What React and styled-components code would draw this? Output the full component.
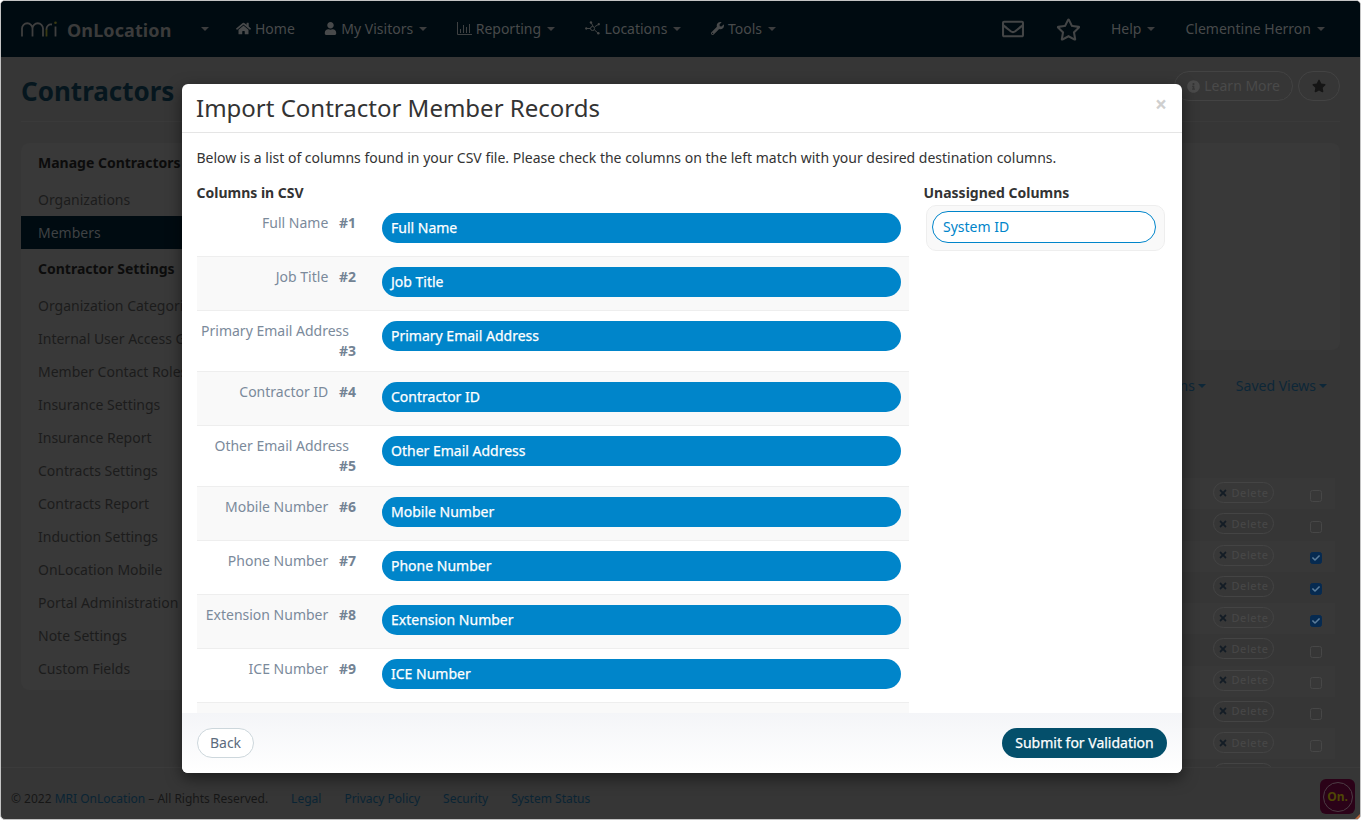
import React from 'react';
import styled, { createGlobalStyle } from 'styled-components';
import { FaHome, FaUser, FaWrench, FaRegStar, FaRegEnvelope, FaInfoCircle, FaStar, FaTimes, FaCheck } from 'react-icons/fa';

const Global = createGlobalStyle`
  html, body { margin: 0; padding: 0; background: #fff; }
  body { font-family: "Noto Sans", "Open Sans", sans-serif; font-size: 14px; line-height: 20px; }
  * { box-sizing: border-box; }
`;

const Frame = styled.div`
  position: relative; width: 1361px; height: 820px; overflow: hidden;
  display: flex; flex-direction: column;
  background: #363636; border: 1px solid #c4c4c4; border-radius: 5px;
`;

/* ---------- dimmed page behind the dialog ---------- */
const Nav = styled.nav`
  flex: none; height: 56px; background: #000b11; color: #484a4b;
  display: flex; align-items: center; padding-left: 20px; padding-right: 35px;
`;
const Brand = styled.div`display: flex; align-items: center; gap: 10px; width: 180px;`;
const BrandName = styled.span`font-size: 18px; font-weight: 700; color: #3b3b3b; letter-spacing: .1px; margin-top: 2px;`;
const Menu = styled.div`display: flex; align-items: center; gap: 29.5px; margin-left: 27px;`;
const MenuItem = styled.span`display: inline-flex; align-items: center; gap: 4px; font-size: 14px; margin-top: -1px; margin-right: ${p => p.$mr || 0}px;`;
const Caret = styled.i`
  display: inline-block; width: 0; height: 0; margin-left: ${p => p.$gap ?? 3}px;
  border-left: 4px solid transparent; border-right: 4px solid transparent;
  border-top: 4px solid ${p => p.$color || '#3c3d3e'};
`;
const NavRight = styled.div`margin-left: auto; display: flex; align-items: center;`;
const NavIcon = styled.span`display: inline-flex; color: #434546; margin-right: ${p => p.$mr}px;`;

const Main = styled.main`flex: 1; min-height: 0; overflow: hidden; display: flex; flex-direction: column; padding: 0 20px;`;
const TitleRow = styled.div`
  flex: none; height: 65px; display: flex; align-items: center; justify-content: space-between;
  border-bottom: 1px solid #3a3a3a; padding-top: 4px;
`;
const PageTitle = styled.h1`margin: 0; font-size: 26px; line-height: 36px; font-weight: 700; color: #06161e;`;
const TitleActions = styled.div`display: flex; gap: 5px; margin-top: -10px;`;
const GhostPill = styled.span`
  height: 30px; min-width: 42px; display: inline-flex; align-items: center; justify-content: center; gap: 4px;
  padding: 0 12px; border: 1px solid #434343; border-radius: 15px; color: #4a4a4a;
`;
const Columns = styled.div`display: flex; gap: 15px; margin-top: 21px; flex: 1; min-height: 0;`;
const Side = styled.aside`
  flex: none; width: 205px; height: 547px; padding-bottom: 5px;
  background: #393939; border-radius: 8px;
`;
const SideHead = styled.div`height: 40px; padding-left: 17px; display: flex; align-items: center; font-weight: 700; color: #0c0c0c;`;
const SideItem = styled.div`
  height: 33px; padding-left: 17px; display: flex; align-items: center;
  color: ${p => p.$on ? '#3f4244' : '#1c1c1c'}; background: ${p => p.$on ? '#000b11' : 'transparent'};
`;
const Content = styled.section`flex: 1; min-width: 0; overflow: hidden;`;
const TopPanel = styled.div`height: 207px; background: #393939; border-radius: 8px;`;
const Toolbar = styled.div`
  height: 20px; margin-top: 26px; padding-right: 13px; display: flex; justify-content: flex-end; gap: 30px;
  color: #0d2738;
`;
const ToolLink = styled.span`display: inline-flex; align-items: center;`;
const Table = styled.div`margin-top: 82px; margin-right: 5px;`;
const Row = styled.div`
  height: 31.25px; display: flex; justify-content: flex-end; align-items: center; gap: 36px; padding-right: 13px;
  background: ${p => p.$odd ? '#383838' : 'transparent'};
`;
const DeleteBtn = styled.span`
  width: 61px; height: 21px; border: 1px solid #444; border-radius: 11px; margin-top: -2px;
  display: inline-flex; align-items: center; justify-content: center; gap: 3px;
  font-size: 11px; letter-spacing: .6px; color: #484848;
  svg { color: #131c25; }
`;
const Check = styled.span`
  width: 12px; height: 12px; border-radius: 2.5px; margin-top: 4px;
  display: inline-flex; align-items: center; justify-content: center;
  border: 1px solid ${p => p.$on ? '#062a50' : '#474747'}; background: ${p => p.$on ? '#062a50' : 'transparent'};
  color: #5c7d9a;
`;
const Foot = styled.footer`
  flex: none; height: 52px; padding: 10px 0 0 10px; border-top: 1px solid #3b3b3b;
  display: flex; align-items: center; font-size: 12px; color: #161616;
`;
const FootText = styled.span`margin-right: 23px;`;
const FootLink = styled.a`color: #0a2434; margin-right: ${p => p.$mr || 0}px;`;
const Badge = styled.div`
  position: absolute; left: 1319px; top: 778px; width: 35px; height: 35px; border-radius: 6px;
  background: #2b0218; display: flex; align-items: center; justify-content: center;
`;
const BadgeRing = styled.div`
  width: 30px; height: 30px; border-radius: 50%; border: 1px solid #4c3c44;
  display: flex; align-items: center; justify-content: center;
  font-size: 12px; font-weight: 700; color: #4f4605;
`;
const Corner = styled.div`
  position: absolute; right: 0; bottom: 0; width: 5px; height: 5px; background: #b8693c;
  clip-path: polygon(100% 0, 100% 100%, 0 100%);
`;

/* ---------- dialog ---------- */
const Dialog = styled.div`
  position: absolute; left: 181px; top: 83px; width: 1000px; height: 689px;
  background: #fff; border-radius: 6px; box-shadow: 0 5px 15px rgba(0,0,0,.5);
  display: flex; flex-direction: column; overflow: hidden; color: #333;
`;
const DialogHead = styled.header`
  flex: none; height: 49px; padding: 0 15px 0 14px; display: flex; align-items: center; justify-content: space-between;
  border-bottom: 1px solid #e5e5e5;
`;
const DialogTitle = styled.h2`margin: 0; font-size: 24px; line-height: 48px; font-weight: 400; color: #333;`;
const Close = styled.span`font-size: 21px; font-weight: 700; color: #cfcfcf; margin: -8px 0 0 0; line-height: 1;`;
const DialogBody = styled.div`flex: 1; min-height: 0; overflow: hidden; padding: 15px 15px 0;`;
const Intro = styled.p`margin: 0 0 15px -0.6px; color: #333;`;
const BodyColumns = styled.div`display: flex; gap: 15px;`;
const LeftCol = styled.div`flex: none; width: 712px;`;
const RightCol = styled.div`flex: none; width: 243px;`;
const ColHead = styled.h4`margin: 0 0 0 -0.5px; font-size: 14px; line-height: 20px; font-weight: 700; color: #333;`;
const MapRow = styled.div`
  display: flex; padding: 10px 8px 10px 0; min-height: 54px; border-bottom: 1px solid #eee;
  background: ${p => p.$alt ? '#f9f9f9' : '#fff'};
`;
const MapLabel = styled.div`flex: none; width: 185px; padding: 0 26px 0 4px; text-align: right; color: #7b8a9b;`;
const MapName = styled.span`display: inline-block; margin-right: 7px;`;
const MapNum = styled.b`font-weight: 700; color: #738394;`;
const BluePill = styled.div`
  flex: 1; height: 30px; margin-bottom: 3px; padding-left: 9px; border-radius: 15px;
  background: #0085ca; color: #fff; display: flex; align-items: center;
  -webkit-text-stroke: .25px #fff;
`;
const Tray = styled.div`
  margin: 2px 2px 0; height: 46px; padding: 5px 8px 0 5px;
  background: #f9f9f9; border: 1px solid #eee; border-radius: 10px;
`;
const OutlinePill = styled.div`
  height: 32px; padding-left: 10px; border: 1px solid #0085ca; border-radius: 16px;
  background: #fff; color: #0085ca; display: flex; align-items: center;
`;
const DialogFoot = styled.footer`
  flex: none; height: 60px; padding: 15px; display: flex; justify-content: space-between;
  background: linear-gradient(#f4f5f8, #fff);
`;
const BackBtn = styled.button`
  height: 30px; width: 57px; padding: 0; border: 1px solid #cdd7dc; border-radius: 15px; background: #fff;
  color: #5c6b7d; font: inherit;
`;
const SubmitBtn = styled.button`
  height: 30px; width: 165px; padding: 0; border: 0; border-radius: 15px; background: #044f6b;
  color: #fff; font: inherit; -webkit-text-stroke: .25px #fff;
`;

const Logo = () => (
  <svg width="36" height="16" viewBox="0 0 36 16" fill="none" strokeWidth="1.8">
    <path d="M1 15.5V7.5a5 5 0 0 1 10.5 0v8M11.5 7.5a5 5 0 0 1 10.5 0v8" stroke="#3f3f3f" />
    <path d="M25.5 15.5V8" stroke="#3a3a12" />
    <path d="M25.5 8.5a4.5 4.5 0 0 1 5.5-5" stroke="#3f3f3f" />
    <path d="M34.5 15.5V5.5" stroke="#3f3f3f" />
    <circle cx="34.5" cy="1.8" r="1.3" fill="#3a3a12" stroke="none" />
  </svg>
);
const ChartIcon = () => (
  <svg width="15" height="13" viewBox="0 0 15 13" fill="none" stroke="#3f4142" strokeWidth="1">
    <path d="M.5 0v12.5H15M3.5 11V7M6.5 11V3M9.5 11V5M12.5 11V2" />
  </svg>
);
const NodesIcon = () => (
  <svg width="16" height="15" viewBox="0 0 18 16" fill="none" stroke="#454747" strokeWidth="1.1">
    <path d="M2 8h4M7 1.5l2 4M10.5 9.5l4 3.5M11 6l4-2.5" />
    <circle cx="8.5" cy="8" r="2.3" />
    <g fill="#454747" stroke="none">
      <circle cx="1.4" cy="8" r="1.3" /><circle cx="6.7" cy="1.3" r="1.4" />
      <circle cx="15.5" cy="3.2" r="1.3" /><circle cx="15" cy="13.4" r="1.4" />
    </g>
  </svg>
);

const sideTop = ['Organizations', 'Members'];
const sideBottom = ['Organization Categories', 'Internal User Access Groups', 'Member Contact Roles', 'Insurance Settings', 'Insurance Report', 'Contracts Settings', 'Contracts Report', 'Induction Settings', 'OnLocation Mobile', 'Portal Administration', 'Note Settings', 'Custom Fields'];
const csv = ['Full Name', 'Job Title', 'Primary Email Address', 'Contractor ID', 'Other Email Address', 'Mobile Number', 'Phone Number', 'Extension Number', 'ICE Number'];
const checked = [2, 3, 4];

export default function App() {
  return (
    <>
      <Global />
      <Frame>
        <Nav>
          <Brand><Logo /><BrandName>OnLocation</BrandName></Brand>
          <Caret $gap={0} />
          <Menu>
            <MenuItem><FaHome size={15} />Home</MenuItem>
            <MenuItem><FaUser size={13} />My Visitors<Caret $gap={2} /></MenuItem>
            <MenuItem><ChartIcon />Reporting<Caret $gap={2} /></MenuItem>
            <MenuItem><NodesIcon />Locations<Caret $gap={2} /></MenuItem>
            <MenuItem><FaWrench size={13} />Tools<Caret $gap={2} /></MenuItem>
          </Menu>
          <NavRight>
            <NavIcon $mr={32}><FaRegEnvelope size={22} /></NavIcon>
            <NavIcon $mr={30}><FaRegStar size={25} /></NavIcon>
            <MenuItem $mr={30}>Help<Caret $gap={2} /></MenuItem>
            <MenuItem>Clementine Herron<Caret $gap={2} /></MenuItem>
          </NavRight>
        </Nav>
        <Main>
          <TitleRow>
            <PageTitle>Contractors</PageTitle>
            <TitleActions>
              <GhostPill><FaInfoCircle size={13} color="#4a4a4a" />Learn More</GhostPill>
              <GhostPill><FaStar size={14} color="#151515" /></GhostPill>
            </TitleActions>
          </TitleRow>
          <Columns>
            <Side>
              <SideHead>Manage Contractors</SideHead>
              {sideTop.map(s => <SideItem key={s} $on={s === 'Members'}>{s}</SideItem>)}
              <SideHead>Contractor Settings</SideHead>
              {sideBottom.map(s => <SideItem key={s}>{s}</SideItem>)}
            </Side>
            <Content>
              <TopPanel />
              <Toolbar>
                <ToolLink>Columns<Caret $color="#0d2738" /></ToolLink>
                <ToolLink>Saved Views<Caret $color="#0d2738" /></ToolLink>
              </Toolbar>
              <Table>
                {Array.from({ length: 10 }, (_, i) => (
                  <Row key={i} $odd={i % 2 === 0}>
                    <DeleteBtn><FaTimes size={10} />Delete</DeleteBtn>
                    <Check $on={checked.includes(i)}>{checked.includes(i) && <FaCheck size={8} />}</Check>
                  </Row>
                ))}
              </Table>
            </Content>
          </Columns>
        </Main>
        <Foot>
          <FootText>© 2022 <FootLink as="span">MRI OnLocation</FootLink> – All Rights Reserved.</FootText>
          <FootLink $mr={23}>Legal</FootLink>
          <FootLink $mr={23}>Privacy Policy</FootLink>
          <FootLink $mr={23}>Security</FootLink>
          <FootLink>System Status</FootLink>
        </Foot>
        <Badge><BadgeRing>On.</BadgeRing></Badge>
        <Corner />

        <Dialog>
          <DialogHead>
            <DialogTitle>Import Contractor Member Records</DialogTitle>
            <Close>×</Close>
          </DialogHead>
          <DialogBody>
            <Intro>Below is a list of columns found in your CSV file. Please check the columns on the left match with your desired destination columns.</Intro>
            <BodyColumns>
              <LeftCol>
                <ColHead>Columns in CSV</ColHead>
                {csv.map((c, i) => (
                  <MapRow key={c} $alt={i % 2 === 1}>
                    <MapLabel><MapName>{c}</MapName> <MapNum>#{i + 1}</MapNum></MapLabel>
                    <BluePill>{c}</BluePill>
                  </MapRow>
                ))}
                <MapRow $alt />
              </LeftCol>
              <RightCol>
                <ColHead>Unassigned Columns</ColHead>
                <Tray><OutlinePill>System ID</OutlinePill></Tray>
              </RightCol>
            </BodyColumns>
          </DialogBody>
          <DialogFoot>
            <BackBtn>Back</BackBtn>
            <SubmitBtn>Submit for Validation</SubmitBtn>
          </DialogFoot>
        </Dialog>
      </Frame>
    </>
  );
}
